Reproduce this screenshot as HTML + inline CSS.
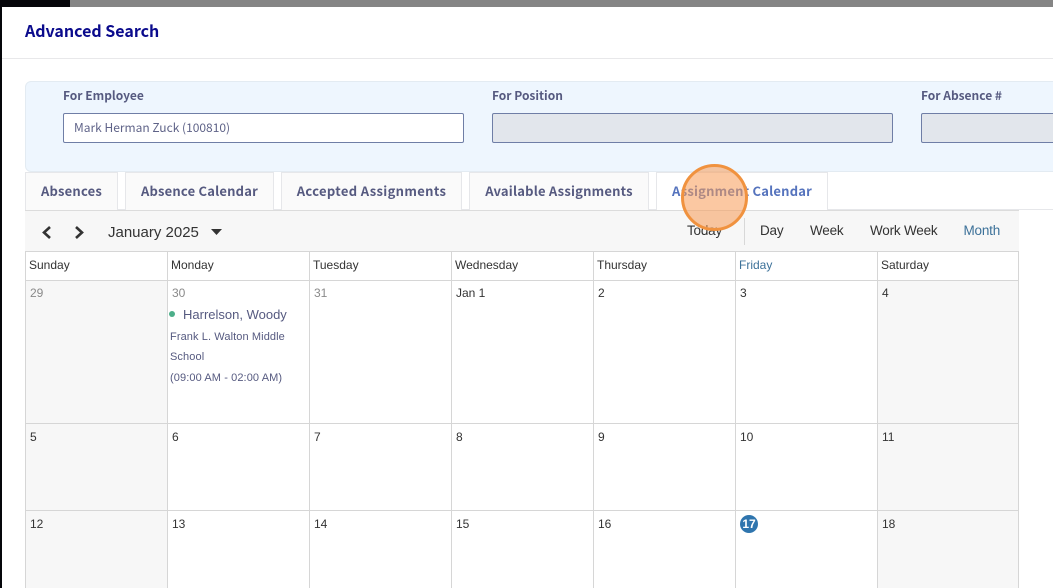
<!DOCTYPE html>
<html><head><meta charset="utf-8"><style>
html,body{margin:0;padding:0;width:1053px;height:588px;overflow:hidden;background:#fff}
body{position:relative;font-family:"Liberation Sans",sans-serif}
div,span{position:absolute;box-sizing:border-box;white-space:nowrap}
.n{font-family:"Noto Sans CJK JP","Liberation Sans",sans-serif}
.lab{font-size:12px;font-weight:700;color:#565a80;line-height:16px;top:88px}
.inp{top:113px;height:30px;border:1px solid #6f7ea6;border-radius:2px}
.tab{top:172px;height:38px;background:#fafafa;border:1px solid #e6e7ea;border-bottom:none;font-size:13px;font-weight:700;color:#565a80;line-height:35px;text-align:center;letter-spacing:.2px}
.tb{font-size:13.5px;letter-spacing:-.2px;color:#333;top:223px;line-height:16px}
.h{font-size:12px;color:#333;top:258px;line-height:14px}
.d{font-size:12px;color:#333;line-height:14px}
.g{color:#8a8a8a}
.v{width:1px;background:#d6d6d6;top:251px;height:337px}
.hl{height:1px;background:#d6d6d6;left:25px;width:994px}
.w{background:#f7f7f7}
.e{left:170px;font-size:11px;letter-spacing:.1px;color:#565a80;line-height:13px}
</style></head><body>
<div style="left:0;top:0;width:1053px;height:7px;background:#858585"></div>
<div style="left:0;top:0;width:70px;height:7px;background:#05060a"></div>
<div style="left:0;top:7px;width:2px;height:581px;background:#05060a"></div>
<div class="n" style="left:25px;top:18px;font-size:16px;font-weight:700;color:#0a0a8c;line-height:24px">Advanced Search</div>
<div style="left:2px;top:58px;width:1051px;height:1px;background:#e8e8ea"></div>

<div style="left:25px;top:81px;width:1040px;height:91px;background:#eef6fe;border:1px solid #e3ebf2;border-radius:6px"></div>
<div class="lab n" style="left:63px">For Employee</div>
<div class="inp" style="left:63px;width:401px;background:#fff"></div>
<div class="n" style="left:74px;top:119px;font-size:12px;color:#5f6388;line-height:17px">Mark Herman Zuck (100810)</div>
<div class="lab n" style="left:492px">For Position</div>
<div class="inp" style="left:492px;width:401px;background:#e2e6ec"></div>
<div class="lab n" style="left:921px">For Absence #</div>
<div class="inp" style="left:921px;width:160px;background:#e2e6ec"></div>

<div style="left:25px;top:209px;width:1028px;height:1px;background:#e6e7ea"></div>
<div class="tab n" style="left:25px;width:93px">Absences</div>
<div class="tab n" style="left:125px;width:149px">Absence Calendar</div>
<div class="tab n" style="left:281px;width:181px;letter-spacing:.35px">Accepted Assignments</div>
<div class="tab n" style="left:469px;width:180px">Available Assignments</div>
<div class="tab n" style="left:656px;width:172px;background:#fff;color:#5573bd;height:38px">Assignment Calendar</div>

<div style="left:25px;top:210px;width:994px;height:42px;background:#f7f7f7;border-top:1px solid #dcdcdc"></div>
<svg style="position:absolute;left:38px;top:224px" width="52" height="17" viewBox="0 0 52 17"><path d="M12 3 L6 8.5 L12 14" fill="none" stroke="#333" stroke-width="2.6"/><path d="M38 3 L44 8.5 L38 14" fill="none" stroke="#333" stroke-width="2.6"/></svg>
<div style="left:108px;top:224px;font-size:15px;color:#333;line-height:18px">January 2025</div>
<svg style="position:absolute;left:211px;top:228px" width="12" height="8"><path d="M0 1 H11 L5.5 7 Z" fill="#333"/></svg>
<div class="tb" style="left:687px">Today</div>
<div style="left:744px;top:218px;width:1px;height:27px;background:#d8d8d8"></div>
<div class="tb" style="left:760px">Day</div>
<div class="tb" style="left:810px">Week</div>
<div class="tb" style="left:870px">Work Week</div>
<div class="tb" style="left:963.5px;color:#3c7199">Month</div>

<div class="w" style="left:26px;top:281px;width:141px;height:307px"></div>
<div class="w" style="left:878px;top:281px;width:140px;height:307px"></div>

<div class="hl" style="top:251px"></div>
<div class="hl" style="top:280px"></div>
<div class="hl" style="top:423px"></div>
<div class="hl" style="top:510px"></div>
<div class="v" style="left:25px"></div>
<div class="v" style="left:167px"></div>
<div class="v" style="left:309px"></div>
<div class="v" style="left:451px"></div>
<div class="v" style="left:593px"></div>
<div class="v" style="left:735px"></div>
<div class="v" style="left:877px"></div>
<div class="v" style="left:1018px"></div>

<div class="h" style="left:29px">Sunday</div>
<div class="h" style="left:171px">Monday</div>
<div class="h" style="left:313px">Tuesday</div>
<div class="h" style="left:455px">Wednesday</div>
<div class="h" style="left:597px">Thursday</div>
<div class="h" style="left:739px;color:#3c7199">Friday</div>
<div class="h" style="left:881px">Saturday</div>

<div class="d g" style="left:30px;top:286px">29</div>
<div class="d g" style="left:172px;top:286px">30</div>
<div class="d g" style="left:314px;top:286px">31</div>
<div class="d" style="left:456px;top:286px">Jan 1</div>
<div class="d" style="left:598px;top:286px">2</div>
<div class="d" style="left:740px;top:286px">3</div>
<div class="d" style="left:882px;top:286px">4</div>

<div style="left:169px;top:311px;width:6px;height:6px;border-radius:50%;background:#4caf8a"></div>
<div style="left:183px;top:307px;color:#565a80;line-height:15px;font-size:13px">Harrelson, Woody</div>
<div class="e" style="top:331px">Frank L. Walton Middle</div>
<div class="e" style="top:351px">School</div>
<div class="e" style="top:372px">(09:00 AM - 02:00 AM)</div>

<div class="d" style="left:30px;top:430px">5</div>
<div class="d" style="left:172px;top:430px">6</div>
<div class="d" style="left:314px;top:430px">7</div>
<div class="d" style="left:456px;top:430px">8</div>
<div class="d" style="left:598px;top:430px">9</div>
<div class="d" style="left:740px;top:430px">10</div>
<div class="d" style="left:882px;top:430px">11</div>

<div class="d" style="left:30px;top:517px">12</div>
<div class="d" style="left:172px;top:517px">13</div>
<div class="d" style="left:314px;top:517px">14</div>
<div class="d" style="left:456px;top:517px">15</div>
<div class="d" style="left:598px;top:517px">16</div>
<div style="left:740px;top:515px;width:18px;height:18px;border-radius:50%;background:#2f75ae;color:#fff;font-size:12px;font-weight:700;line-height:18px;text-align:center">17</div>
<div class="d" style="left:882px;top:517px">18</div>

<div style="left:681px;top:164px;width:67px;height:67px;border-radius:50%;background:rgba(248,155,85,.55);border:3px solid #f0923f"></div>
</body></html>
